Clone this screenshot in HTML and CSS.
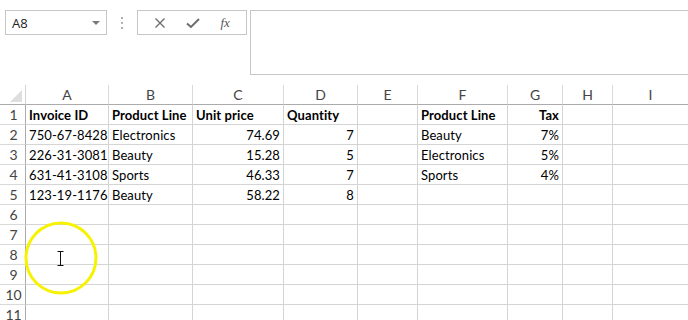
FILE: index.html
```html
<!DOCTYPE html>
<html>
<head>
<meta charset="utf-8">
<link rel="stylesheet" href="styles.css">
</head>
<body>
<div class="app">
  <div class="toolbar">
    <div class="namebox">
      <span class="name">A8</span>
      <svg class="caret" width="8" height="4" viewBox="0 0 8 4"><path d="M0 0H8L4 4Z" fill="#7a7a7a"/></svg>
    </div>
    <div class="grip"><i></i><i></i><i></i></div>
    <div class="fbuttons">
      <svg class="btn" width="12" height="12" viewBox="0 0 12 12"><path d="M1.5 1.5L10.5 10.5M10.5 1.5L1.5 10.5" stroke="#6d6d6d" stroke-width="1.4" fill="none"/></svg>
      <svg class="btn" width="14" height="12" viewBox="0 0 14 12"><path d="M1 6.5L5 10L13 2" stroke="#6d6d6d" stroke-width="2" fill="none"/></svg>
      <span class="fx">fx</span>
    </div>
    <div class="formula"></div>
  </div>

  <div class="sheet">
    <div class="corner"><svg width="12" height="12" viewBox="0 0 12 12"><path d="M12 0V12H0Z" fill="#dedede"/></svg></div>
    <div class="ch">A</div><div class="ch">B</div><div class="ch">C</div><div class="ch">D</div><div class="ch">E</div><div class="ch">F</div><div class="ch">G</div><div class="ch">H</div><div class="ch last">I</div>

    <div class="rh">1</div>
    <div class="c b">Invoice ID</div><div class="c b">Product Line</div><div class="c b">Unit price</div><div class="c b">Quantity</div><div class="c"></div><div class="c b">Product Line</div><div class="c b r">Tax</div><div class="c"></div><div class="c last"></div>

    <div class="rh">2</div>
    <div class="c">750-67-8428</div><div class="c">Electronics</div><div class="c r">74.69</div><div class="c r">7</div><div class="c"></div><div class="c">Beauty</div><div class="c r">7%</div><div class="c"></div><div class="c last"></div>

    <div class="rh">3</div>
    <div class="c">226-31-3081</div><div class="c">Beauty</div><div class="c r">15.28</div><div class="c r">5</div><div class="c"></div><div class="c">Electronics</div><div class="c r">5%</div><div class="c"></div><div class="c last"></div>

    <div class="rh">4</div>
    <div class="c">631-41-3108</div><div class="c">Sports</div><div class="c r">46.33</div><div class="c r">7</div><div class="c"></div><div class="c">Sports</div><div class="c r">4%</div><div class="c"></div><div class="c last"></div>

    <div class="rh">5</div>
    <div class="c">123-19-1176</div><div class="c">Beauty</div><div class="c r">58.22</div><div class="c r">8</div><div class="c"></div><div class="c"></div><div class="c"></div><div class="c"></div><div class="c last"></div>

    <div class="rh">6</div>
    <div class="c"></div><div class="c"></div><div class="c"></div><div class="c"></div><div class="c"></div><div class="c"></div><div class="c"></div><div class="c"></div><div class="c last"></div>
    <div class="rh">7</div>
    <div class="c"></div><div class="c"></div><div class="c"></div><div class="c"></div><div class="c"></div><div class="c"></div><div class="c"></div><div class="c"></div><div class="c last"></div>
    <div class="rh">8</div>
    <div class="c"></div><div class="c"></div><div class="c"></div><div class="c"></div><div class="c"></div><div class="c"></div><div class="c"></div><div class="c"></div><div class="c last"></div>
    <div class="rh">9</div>
    <div class="c"></div><div class="c"></div><div class="c"></div><div class="c"></div><div class="c"></div><div class="c"></div><div class="c"></div><div class="c"></div><div class="c last"></div>
    <div class="rh">10</div>
    <div class="c"></div><div class="c"></div><div class="c"></div><div class="c"></div><div class="c"></div><div class="c"></div><div class="c"></div><div class="c"></div><div class="c last"></div>
    <div class="rh">11</div>
    <div class="c"></div><div class="c"></div><div class="c"></div><div class="c"></div><div class="c"></div><div class="c"></div><div class="c"></div><div class="c"></div><div class="c last"></div>

    <svg class="highlight" width="76" height="76" viewBox="0 0 76 76"><circle cx="38" cy="38" r="35" stroke="#f7f200" stroke-width="3" fill="none"/></svg>
    <svg class="ibeam" width="7" height="15" viewBox="0 0 7 15"><path d="M0.5 0.5H6.5M3.5 0.5V14.5M0.5 14.5H6.5" stroke="#111" stroke-width="1" fill="none"/></svg>
  </div>
</div>
</body>
</html>
```

FILE: styles.css
```css
html, body {
  margin: 0;
  padding: 0;
  background: #ffffff;
  overflow: hidden;
}
.app {
  width: 688px;
  height: 320px;
  overflow: hidden;
  font-family: Lato, "Liberation Sans", sans-serif;
}
.toolbar {
  display: flex;
  align-items: flex-start;
  padding: 10px 0 0 5px;
  height: 75px;
  box-sizing: border-box;
}
.namebox {
  width: 102px;
  height: 25px;
  box-sizing: border-box;
  border: 1px solid #c6c6c6;
  display: flex;
  align-items: center;
  justify-content: space-between;
  padding: 0 6px 0 6px;
}
.name {
  font-family: "Open Sans", "Liberation Sans", sans-serif;
  font-size: 13px;
  color: #222;
}
.caret { margin-top: 1px; }
.grip {
  width: 30px;
  height: 25px;
  display: flex;
  flex-direction: column;
  align-items: center;
  justify-content: center;
  gap: 3px;
}
.grip i {
  display: block;
  width: 2px;
  height: 2px;
  background: #b0b0b0;
}
.fbuttons {
  width: 110px;
  height: 25px;
  box-sizing: border-box;
  border: 1px solid #c6c6c6;
  display: flex;
  align-items: center;
  justify-content: space-around;
  padding: 0 6px 0 6px;
}
.fx {
  font-family: "Liberation Serif", serif;
  font-style: italic;
  font-size: 13px;
  color: #555;
}
.formula {
  margin-left: 3px;
  flex: 1;
  height: 65px;
  box-sizing: border-box;
  border: 1px solid #c6c6c6;
  border-right: none;
}
.sheet {
  position: relative;
  margin-top: 10px;
  display: grid;
  grid-template-columns: 26px 83px 84px 91px 74px 60px 90px 55px 50px 1fr;
  grid-auto-rows: 20px;
  font-size: 13px;
}
.corner {
  border-right: 1px solid #d4d4d4;
  border-bottom: 1px solid #ababab;
  display: flex;
  align-items: flex-end;
  justify-content: flex-end;
  padding: 0 3px 2px 0;
  box-sizing: border-box;
}
.corner svg { display: block; }
.ch {
  border-right: 1px solid #d9d9d9;
  border-bottom: 1px solid #ababab;
  color: #444;
  text-align: center;
  line-height: 20px;
  font-size: 14px;
  box-sizing: border-box;
}
.rh {
  border-right: 1px solid #ababab;
  border-bottom: 1px solid #d9d9d9;
  color: #444;
  text-align: center;
  line-height: 20px;
  font-size: 14px;
  box-sizing: border-box;
  padding-left: 2px;
}
.c {
  border-right: 1px solid #d4d4d4;
  border-bottom: 1px solid #d4d4d4;
  box-sizing: border-box;
  color: #000;
  line-height: 17px;
  padding: 2px 3px 0 3px;
  white-space: nowrap;
  overflow: hidden;
  letter-spacing: 0.1px;
}
.last { border-right: none; }
.b { font-weight: bold; }
.r { text-align: right; }
.highlight {
  position: absolute;
  left: 23px;
  top: 135px;
}
.ibeam {
  position: absolute;
  left: 57px;
  top: 166px;
}
```
